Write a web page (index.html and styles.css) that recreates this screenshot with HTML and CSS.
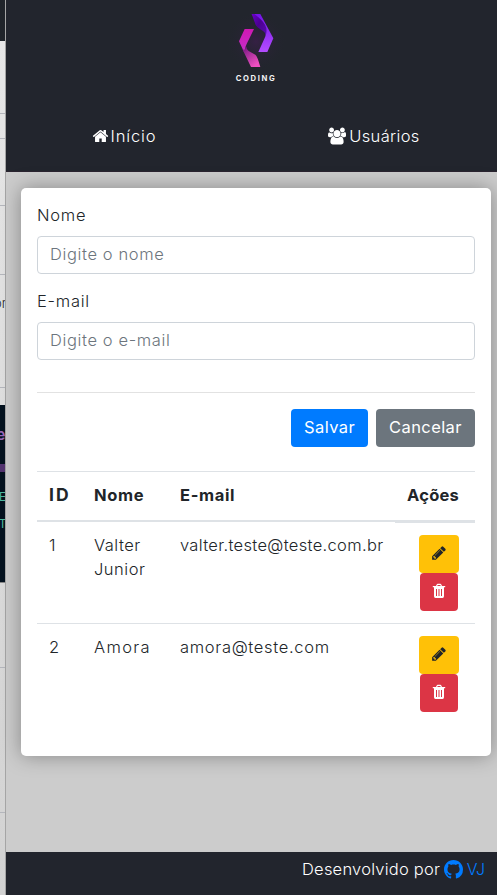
FILE: index.html
```
<!DOCTYPE html>
<html lang="pt-BR">
<head>
<meta charset="utf-8">
<title>Usuários</title>
<link rel="stylesheet" href="styles.css">
</head>
<body>
<svg class="defs" aria-hidden="true">
  <symbol id="home" viewBox="0 0 1792 1792"><path d="M1472 992v480q0 26-19 45t-45 19h-384v-384h-256v384h-384q-26 0-45-19t-19-45v-480q0-1 .5-3t.5-3l575-474 575 474q1 2 1 6zm223-69l-62 74q-8 9-21 11h-3q-13 0-21-7l-692-577-692 577q-12 8-24 7-13-2-21-11l-62-74q-8-10-7-23.500t11-21.500l719-599q32-26 76-26t76 26l244 204v-195q0-14 9-23t23-9h192q14 0 23 9t9 23v408l219 182q10 8 11 21.500t-7 23.500z"/></symbol>
  <symbol id="users" viewBox="64 0 1920 1792"><path d="M657 896q-162 5-265 128h-134q-82 0-138-40.500t-56-118.500q0-353 124-353 6 0 43.500 21t97.500 42.500 119 21.500q67 0 133-23-5 37-5 66 0 159 93 287zm1071 637q0 120-73 189.500t-194 69.500h-874q-121 0-194-69.500t-73-189.500q0-53 3.500-103.500t14-109 26.500-108.500 43-97.500 62-81 85.500-53.500 111.500-20q10 0 43 21.500t73 48 107 48 135 21.500 135-21.500 107-48 73-48 43-21.500q61 0 111.500 20t85.500 53.500 62 81 43 97.500 26.500 108.500 14 109 3.500 103.500zm-1024-1277q0 106-75 181t-181 75-181-75-75-181 75-181 181-75 181 75 75 181zm704 384q0 159-112.500 271.500t-271.500 112.500-271.500-112.500-112.500-271.500 112.500-271.500 271.500-112.500 271.500 112.500 112.500 271.500zm576 225q0 78-56 118.500t-138 40.500h-134q-103-123-265-128 93-128 93-287 0-29-5-66 66 23 133 23 59 0 119-21.500t97.500-42.500 43.500-21q124 0 124 353zm-128-609q0 106-75 181t-181 75-181-75-75-181 75-181 181-75 181 75 75 181z"/></symbol>
  <symbol id="pencil" viewBox="0 0 1792 1792"><path d="M491 1536l91-91-235-235-91 91v107h128v128h107zm523-928q0-22-22-22-10 0-17 7l-542 542q-7 7-7 17 0 22 22 22 10 0 17-7l542-542q7-7 7-17zm-54-192l416 416-832 832h-416v-416zm683 96q0 53-37 90l-166 166-416-416 166-165q36-38 90-38 53 0 91 38l235 234q37 39 37 91z"/></symbol>
  <symbol id="trash" viewBox="0 0 16 16"><path fill-rule="evenodd" d="M5 3L5.700 1.400Q6 .8 6.700 .8H9.300Q10 .8 10.300 1.400L11 3H14.200V4.300H13V13.200Q13 15 11.500 15H4.500Q3 15 3 13.200V4.300H1.800V3ZM6.300 3H9.700L9.300 2H6.700ZM5 6V13H6V6ZM7.500 6V13H8.500V6ZM10 6V13H11V6Z"/></symbol>
  <symbol id="github" viewBox="0 0 16 16"><path d="M8 0C3.580 0 0 3.580 0 8c0 3.540 2.290 6.530 5.470 7.590.4.070.55-.17.55-.38 0-.19-.01-.82-.01-1.490-2.010.37-2.530-.49-2.690-.94-.09-.23-.48-.94-.82-1.130-.28-.15-.68-.52-.01-.53.63-.01 1.080.58 1.230.82.72 1.210 1.870.87 2.330.66.07-.52.28-.87.51-1.070-1.780-.2-3.640-.89-3.640-3.950 0-.87.31-1.590.82-2.150-.08-.2-.36-1.020.08-2.120 0 0 .67-.21 2.200.82.64-.18 1.320-.27 2-.27s1.360.09 2 .27c1.530-1.040 2.200-.82 2.200-.82.44 1.100.16 1.920.08 2.120.51.56.82 1.270.82 2.150 0 3.070-1.870 3.750-3.650 3.950.29.25.54.73.54 1.480 0 1.070-.01 1.930-.01 2.200 0 .21.15.46.55.38A8.010 8.010 0 0 0 16 8c0-4.420-3.580-8-8-8z"/></symbol>
</svg>
<div class="screen">
  <aside class="behind">
    <div class="b-top"></div>
    <div class="b-row r1"></div>
    <div class="b-row r2"></div>
    <div class="b-row r3"></div>
    <div class="b-row r4"></div>
    <div class="b-row r5"><span>or</span></div>
    <div class="b-gap"></div>
    <div class="b-code">
      <b>e</b>
      <i></i>
      <span>E</span>
      <span>T</span>
    </div>
    <div class="b-row r6"></div>
    <div class="b-row r7"></div>
  </aside>
  <div class="app">
    <header class="header">
      <div class="logo">
        <svg width="85" height="95" viewBox="0 0 255 285">
          <defs>
            <linearGradient id="g1" x1="0" y1="0" x2="1" y2="1"><stop offset="0" stop-color="#6a00c8"/><stop offset=".45" stop-color="#4b0092"/><stop offset="1" stop-color="#5a10b0"/></linearGradient>
            <linearGradient id="g2" x1="0" y1="0" x2="0" y2="1"><stop offset="0" stop-color="#7312e8"/><stop offset="1" stop-color="#b44dff"/></linearGradient>
            <linearGradient id="g3" x1="0" y1="0" x2="0" y2="1"><stop offset="0" stop-color="#cf18b4"/><stop offset="1" stop-color="#c52fc9"/></linearGradient>
            <linearGradient id="g4" x1="0" y1="0" x2=".6" y2="1"><stop offset="0" stop-color="#5b0a6c"/><stop offset=".4" stop-color="#9c2a96"/><stop offset="1" stop-color="#ee4fc0"/></linearGradient>
            <radialGradient id="glow"><stop offset="0" stop-color="#352044"/><stop offset="1" stop-color="#22252d" stop-opacity="0"/></radialGradient>
          </defs>
          <circle cx="123" cy="125" r="92" fill="url(#glow)"/>
          <path d="M110 42H136L175 115L157 156H130L150 112Q154 102 150 94Z" fill="url(#g2)"/>
          <path d="M110 42L122 75Q126 83 138 89Q158 99 149 114Q160 92 150 74Q142 60 118 42Z" fill="url(#g1)"/>
          <path d="M117 87H89L72 124L86 154Q90 163 95 158Q86 148 96 130Z" fill="url(#g3)"/>
          <path d="M96 131Q90 144 101 153L121 164Q127 168 136 201H108L82 147Q91 155 96 131Z" fill="url(#g4)"/>
          <text x="62" y="242" class="brand">CODING</text>
        </svg>
      </div>
      <nav class="nav">
        <a><svg class="ic home"><use href="#home"/></svg><span class="t-inicio">Início</span></a>
        <a><svg class="ic users"><use href="#users"/></svg><span class="t-usuarios">Usuários</span></a>
      </nav>
    </header>
    <main class="main">
      <section class="card">
        <form>
          <label>Nome</label>
          <input type="text" placeholder="Digite o nome">
          <label>E-mail</label>
          <input type="text" placeholder="Digite o e-mail">
          <hr>
          <div class="actions">
            <button type="button" class="btn save">Salvar</button>
            <button type="button" class="btn cancel">Cancelar</button>
          </div>
        </form>
        <table>
          <thead>
            <tr><th class="c1">ID</th><th class="c2">Nome</th><th class="c3">E-mail</th><th class="c4">Ações</th></tr>
          </thead>
          <tbody>
            <tr class="first"><td>1</td><td class="name">Valter<br>Junior</td><td class="mail">valter.teste@teste.com.br</td>
              <td class="tools"><div class="ops"><button type="button" class="op edit"><svg><use href="#pencil"/></svg></button><button type="button" class="op del"><svg><use href="#trash"/></svg></button></div></td></tr>
            <tr class="second"><td>2</td><td class="name">Amora</td><td class="mail">amora@teste.com</td>
              <td class="tools"><div class="ops"><button type="button" class="op edit"><svg><use href="#pencil"/></svg></button><button type="button" class="op del"><svg><use href="#trash"/></svg></button></div></td></tr>
          </tbody>
        </table>
      </section>
    </main>
    <footer class="footer">
      <span class="t-dev">Desenvolvido por</span>
      <svg><use href="#github"/></svg>
      <a class="t-vj">VJ</a>
    </footer>
  </div>
</div>
</body>
</html>
```
FILE: styles.css
```
* { box-sizing: border-box; }
body { margin: 0; overflow: hidden; background: #ccc; font: 300 16.500px/24px Inter, "Open Sans", sans-serif; color: #212529; }
.defs { display: none; }
.screen { display: grid; grid-template-columns: 6px 500px; height: 895px; }

.behind { display: flex; flex-direction: column; overflow: hidden; background: linear-gradient(#e8e8e8, #d2d2d2); border-right: 1px solid #a5a5a5; }
.b-top { flex: none; height: 41px; background: #20242a; }
.b-row { flex: none; border-bottom: 1px solid #b4b6bc; }
.r1 { height: 73px; }
.r2 { height: 25px; }
.r3 { height: 67px; }
.r4 { height: 69px; }
.r5 { height: 113px; padding-top: 16px; font-size: 13px; }
.r5 span { margin-left: -6px; }
.b-gap { flex: none; height: 17px; }
.b-code { flex: none; height: 178px; padding-top: 19px; background: #04121f; border-bottom: 1px solid #888; color: #4fb8a0; font: 12px/27px "Liberation Mono", monospace; }
.b-code b { display: block; height: 40px; margin-left: -4px; color: #9a68b8; font-size: 16px; line-height: 24px; }
.b-code i { display: block; height: 8px; margin-bottom: 13px; background: #533470; }
.b-code span { display: block; margin-left: -1px; }
.r6 { height: 85px; }
.r7 { height: 145px; }

.app { display: flex; flex-direction: column; }
.header { height: 172px; background: #22252d; border-bottom: 1px solid #2b2430; }
.logo { display: flex; justify-content: center; height: 100px; padding-left: 3px; }
.brand { font: 700 23px Inter, sans-serif; letter-spacing: 5px; fill: #f2f2f4; }
.nav { display: grid; grid-template-columns: 1fr 1fr; height: 72px; margin: 0 7px 0 -7px; color: #fff; }
.nav a { display: flex; align-items: center; justify-content: center; }
.ic { height: 18px; fill: #fff; margin-right: 3px; }
.home { width: 17px; margin-right: 2px; }
.users { width: 18px; }
.t-inicio { letter-spacing: .850px; }
.t-usuarios { letter-spacing: .350px; }

.main { flex: 1; padding: 16px 15px; background: #ccc; }
.card { height: 568px; padding: 16px; background: #fff; border-radius: 5px; box-shadow: 0 0 20px rgba(0, 0, 0, .34); }
label { display: block; height: 24px; margin-bottom: 8px; line-height: 22px; letter-spacing: .750px; }
input { display: block; width: 100%; height: 38px; margin-bottom: 16px; padding: 0 12px 2px; border: 1px solid #ced4da; border-radius: 4px; font: inherit; letter-spacing: .620px; background: #fff; }
input::placeholder { color: #6c757d; opacity: 1; }
hr { height: 1px; margin: 32px 0 16px; border: 0; background: #e2e2e2; }
.actions { display: flex; justify-content: flex-end; gap: 8px; margin-bottom: 24px; }
.btn { height: 38px; padding: 0 0 2px; border: 0; border-radius: 4px; color: #fff; font: inherit; font-weight: 400; letter-spacing: .400px; }
.save { width: 77px; background: #007bff; }
.cancel { width: 99px; background: #6c757d; }

table { width: 438px; table-layout: fixed; border-collapse: separate; border-spacing: 0; }
th { height: 51px; padding: 0 0 2px 12px; text-align: left; font-weight: 700; letter-spacing: .650px; border-top: 1px solid #dee2e6; border-bottom: 2px solid #dee2e6; }
.c1 { width: 45px; font-size: 17.500px; letter-spacing: 2px; }
.c2 { width: 86px; }
.c3 { width: 227px; }
.c4 { width: 80px; letter-spacing: .250px; }
td { height: 101px; padding: 11px 0 0 12px; vertical-align: top; border-top: 1px solid #dee2e6; }
.first td { border-top: 0; }
.first .tools { border-top: 1px solid #dee2e6; }
.tools { padding-top: 12px; }
.name { letter-spacing: .500px; }
.mail { letter-spacing: .330px; }
.second .name { letter-spacing: 1.350px; }
.second .mail { letter-spacing: .680px; }
.ops { display: flex; flex-direction: column; align-items: center; width: 64px; }
.op { display: flex; align-items: center; justify-content: center; height: 38px; padding: 0; border: 0; border-radius: 4px; }
.op svg { width: 16px; height: 16px; }
.edit { width: 40px; background: #ffc107; fill: #212529; }
.edit svg { margin-bottom: 2px; }
.del { width: 38px; background: #dc3545; fill: #fff; }
.del svg { margin-bottom: 2px; }

.footer { display: flex; justify-content: flex-end; height: 43px; padding: 5px 21px 0 0; background: #22252d; color: #fff; }
.footer svg { width: 19px; height: 19px; margin: 3px 4px 0; fill: #007bff; }
.footer a { color: #007bff; font-size: 16px; }
.t-dev { letter-spacing: .230px; margin-right: -.5px; }
```
